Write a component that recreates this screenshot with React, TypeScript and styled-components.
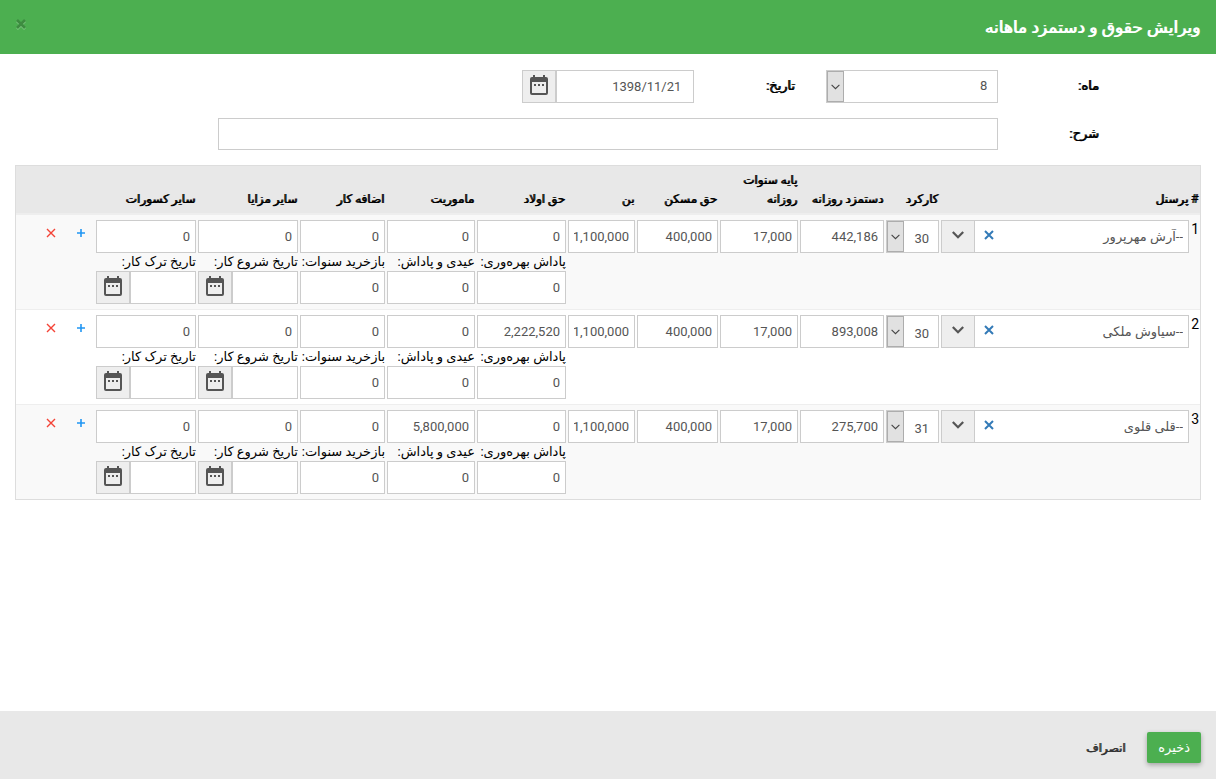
import React, { useState } from "react";
import styled, { createGlobalStyle, css } from "styled-components";

const GlobalStyle = createGlobalStyle`
  *, *::before, *::after { box-sizing: border-box; }
  body {
    margin: 0;
    background: #fff;
    color: #000;
    font: 13px/18px Roboto, "DejaVu Sans", sans-serif;
  }
  button, input, select { font: inherit; margin: 0; }
`;

/* Thickens the regular Persian face, whose own bold cut is much wider. */
const strong = css`
  font-weight: 400;
  text-shadow: -1px 0 0;
`;

const Page = styled.div`
  display: flex;
  flex-direction: column;
  min-height: 100vh;
`;

const Header = styled.header`
  display: flex;
  align-items: center;
  justify-content: space-between;
  min-height: 54px;
  padding: 0 15px;
  background: #4caf50;
`;

const Title = styled.h1`
  margin: 0;
  color: #fff;
  font-size: 17px;
  line-height: 24px;
  ${strong}
`;

const IconButton = styled.button<{ $color: string; $size?: number }>`
  display: inline-flex;
  align-items: center;
  justify-content: center;
  flex: none;
  width: ${(p) => p.$size ?? 12}px;
  height: ${(p) => p.$size ?? 12}px;
  padding: 0;
  border: 0;
  background: none;
  color: ${(p) => p.$color};
  cursor: pointer;
`;

const CloseButton = styled(IconButton)`
  margin-bottom: 6px;
  filter: drop-shadow(0 1px 0 rgba(255, 255, 255, 0.3));
`;

const Main = styled.form`
  flex: 1;
  padding: 16px 0;
`;

const FormGrid = styled.div`
  display: grid;
  grid-template-columns: repeat(12, 1fr);
  row-gap: 15px;
  margin-bottom: 15px;
`;

const FormLabel = styled.label<{ $start: number }>`
  grid-column: ${(p) => p.$start};
  padding: 0 15px;
  line-height: 32px;
  white-space: nowrap;
  ${strong}
`;

const FormField = styled.div<{ $start: number; $span: number }>`
  grid-column: ${(p) => p.$start} / span ${(p) => p.$span};
  padding: 0 15px;
`;

const control = css`
  display: block;
  width: 100%;
  min-width: 0;
  height: 33px;
  border: 1px solid #ccc;
  border-radius: 0;
  background: #fff;
  color: #555;
  outline: none;
  &:focus { border-color: #66afe9; }
`;

const TextInput = styled.input<{ $pad?: number; $short?: boolean }>`
  ${control}
  padding: 0 ${(p) => p.$pad ?? 5}px 1px;
  ${(p) => p.$short && "height: 32px;"}
`;

const SelectBox = styled.div`
  position: relative;
`;

const Select = styled.select<{ $low?: boolean }>`
  ${control}
  appearance: none;
  padding: ${(p) => (p.$low ? "4px 9px 0 18px" : "0 10px 1px 18px")};
`;

const SelectArrow = styled.span`
  position: absolute;
  inset: 1px auto 1px 1px;
  display: flex;
  align-items: center;
  justify-content: center;
  width: 17px;
  border: 1px solid #adadad;
  background: #e1e1e1;
  color: #444;
  pointer-events: none;
`;

const Group = styled.div`
  display: flex;
  align-items: center;
  height: 33px;
  border: 1px solid #ccc;
  background: #fff;
`;

const GroupInput = styled.input<{ $pad?: number }>`
  flex: 1;
  width: 0;
  min-width: 0;
  height: 31px;
  padding: 0 ${(p) => p.$pad ?? 5}px 1px;
  border: 0;
  background: none;
  color: #555;
  outline: none;
`;

const Addon = styled.button<{ $line: number }>`
  display: flex;
  flex: none;
  align-items: center;
  justify-content: center;
  width: ${(p) => 32 + p.$line}px;
  height: 31px;
  padding: 0 0 3px;
  border: 0;
  border-right: ${(p) => p.$line}px solid #ccc;
  background: #eee;
  color: #555;
  cursor: pointer;
`;

const ClearButton = styled(IconButton)`
  margin: 0 8px 3px;
`;

const TableWrap = styled.div`
  padding: 0 15px;
`;

const Table = styled.table`
  width: 100%;
  table-layout: fixed;
  border: 1px solid #ddd;
  border-spacing: 0;
`;

const Col = styled.col<{ $width?: number }>`
  width: ${(p) => (p.$width ? p.$width + "px" : "auto")};
`;

const HeadCell = styled.th`
  height: 48px;
  padding: 5px 1px 4px;
  border-bottom: 1px solid #eee;
  background: #e8e8e8;
  font-size: 12px;
  line-height: 19px;
  text-align: right;
  vertical-align: bottom;
  ${strong}
`;

const Row = styled.tr`
  &:nth-child(odd) { background: #f9f9f9; }
`;

const Cell = styled.td`
  padding: 5px 1px;
  border-top: 1px solid #eee;
  vertical-align: top;
`;

const NumberCell = styled(Cell)`
  padding: 5px 1px 5px 0;
  font-size: 14px;
  text-align: right;
  white-space: nowrap;
`;

const SubLabel = styled.label`
  display: block;
  height: 18px;
  line-height: 18px;
  white-space: nowrap;
`;

const Actions = styled.div`
  display: flex;
  gap: 14px;
  padding: 5px;
`;

const Footer = styled.footer`
  display: flex;
  align-items: center;
  gap: 10px;
  min-height: 68px;
  padding: 4px 15px 0;
  background: #e8e8e8;
`;

const FooterButton = styled.button<{ $primary?: boolean }>`
  height: 31px;
  padding: 1px 11px 0;
  border: 0;
  border-radius: 2px;
  cursor: pointer;
  ${(p) =>
    p.$primary
      ? css`
          background: #4caf50;
          color: #fff;
          box-shadow: 0 2px 5px rgba(0, 0, 0, 0.3);
        `
      : css`
          background: none;
          color: #333;
          font-size: 12px;
          ${strong}
        `}
`;

const CrossIcon = ({ size, weight }: { size: number; weight: number }) => (
  <svg width={size} height={size} viewBox="0 0 10 10" fill="none" stroke="currentColor" strokeWidth={weight} aria-hidden>
    <path d="M1 1L9 9M9 1L1 9" />
  </svg>
);

const PlusIcon = () => (
  <svg width="8" height="8" viewBox="0 0 8 8" fill="none" stroke="currentColor" strokeWidth="1.6" aria-hidden>
    <path d="M4 0V8M0 4H8" />
  </svg>
);

const ThinChevron = () => (
  <svg width="9" height="6" viewBox="0 0 9 6" fill="none" stroke="currentColor" strokeWidth="1.1" aria-hidden>
    <path d="M.6 .8L4.5 4.7L8.4 .8" />
  </svg>
);

const BoldChevron = () => (
  <svg width="12" height="8" viewBox="0 0 12 8" fill="none" stroke="currentColor" strokeWidth="2.2" aria-hidden>
    <path d="M.8 1L6 6.2L11.2 1" />
  </svg>
);

const CalendarIcon = () => (
  <svg width="18" height="20" viewBox="0 0 18 20" fill="currentColor" aria-hidden>
    <path
      fillRule="evenodd"
      d="M3 0H5V2H13V0H15V2H16Q18 2 18 4V18Q18 20 16 20H2Q0 20 0 18V4Q0 2 2 2H3ZM2 7V18H16V7Z"
    />
    <path d="M4 9H6V11H4ZM8 9H10V11H8ZM12 9H14V11H12Z" />
  </svg>
);

const SelectField = ({ id, label, value, max, low }: { id: string; label?: string; value: number; max: number; low?: boolean }) => (
  <SelectBox>
    <Select id={id} aria-label={label} defaultValue={value} $low={low}>
      {Array.from({ length: max }, (_, i) => (
        <option key={i} value={i + 1}>{i + 1}</option>
      ))}
    </Select>
    <SelectArrow><ThinChevron /></SelectArrow>
  </SelectBox>
);

const DateField = ({ id, value, pad }: { id: string; value?: string; pad?: number }) => (
  <Group>
    <GroupInput id={id} type="text" defaultValue={value} $pad={pad} />
    <Addon type="button" $line={2} aria-label="انتخاب تاریخ"><CalendarIcon /></Addon>
  </Group>
);

const PersonField = ({ id, initial }: { id: string; initial: string }) => {
  const [name, setName] = useState(initial);
  return (
    <Group>
      <GroupInput id={id} type="text" aria-label="پرسنل" value={name} onChange={(e) => setName(e.target.value)} />
      <ClearButton type="button" $color="#337ab7" aria-label="پاک کردن" onClick={() => setName("")}>
        <CrossIcon size={10} weight={2} />
      </ClearButton>
      <Addon type="button" $line={1} aria-label="نمایش فهرست"><BoldChevron /></Addon>
    </Group>
  );
};

type Sub = { label: string; kind: "amount" | "date" };
type AmountColumn = { title: string; width: number; sub?: Sub };

const amountColumns: AmountColumn[] = [
  { title: "دستمزد روزانه", width: 86 },
  { title: "پایه سنوات روزانه", width: 80 },
  { title: "حق مسکن", width: 83 },
  { title: "بن", width: 69 },
  { title: "حق اولاد", width: 91, sub: { label: "پاداش بهره‌وری:", kind: "amount" } },
  { title: "ماموریت", width: 90, sub: { label: "عیدی و پاداش:", kind: "amount" } },
  { title: "اضافه کار", width: 87, sub: { label: "بازخرید سنوات:", kind: "amount" } },
  { title: "سایر مزایا", width: 102, sub: { label: "تاریخ شروع کار:", kind: "date" } },
  { title: "سایر کسورات", width: 102, sub: { label: "تاریخ ترک کار:", kind: "date" } },
];

const people = [
  { name: "--آرش مهرپرور", days: 30, amounts: ["442,186", "17,000", "400,000", "1,100,000", "0", "0", "0", "0", "0"] },
  { name: "--سیاوش ملکی", days: 30, amounts: ["893,008", "17,000", "400,000", "1,100,000", "2,222,520", "0", "0", "0", "0"] },
  { name: "--قلی قلوی", days: 31, amounts: ["275,700", "17,000", "400,000", "1,100,000", "0", "5,800,000", "0", "0", "0"] },
];

export default function App() {
  return (
    <Page dir="rtl" lang="fa">
      <GlobalStyle />
      <Header>
        <Title>ویرایش حقوق و دستمزد ماهانه</Title>
        <CloseButton type="button" $color="#3d8c40" aria-label="بستن">
          <CrossIcon size={10} weight={2.6} />
        </CloseButton>
      </Header>
      <Main id="payroll" onSubmit={(e) => e.preventDefault()}>
        <FormGrid>
          <FormLabel $start={2} htmlFor="month">ماه:</FormLabel>
          <FormField $start={3} $span={2}>
            <SelectField id="month" value={8} max={12} />
          </FormField>
          <FormLabel $start={5} htmlFor="date">تاریخ:</FormLabel>
          <FormField $start={6} $span={2}>
            <DateField id="date" value="1398/11/21" pad={12} />
          </FormField>
          <FormLabel $start={2} htmlFor="description">شرح:</FormLabel>
          <FormField $start={3} $span={8}>
            <TextInput id="description" type="text" $pad={12} $short />
          </FormField>
        </FormGrid>
        <TableWrap>
          <Table>
            <colgroup>
              <Col $width={10} />
              <Col />
              <Col $width={55} />
              {amountColumns.map((c) => <Col key={c.title} $width={c.width} />)}
              <Col $width={79} />
            </colgroup>
            <thead>
              <tr>
                <HeadCell scope="col">#</HeadCell>
                <HeadCell scope="col">پرسنل</HeadCell>
                <HeadCell scope="col">کارکرد</HeadCell>
                {amountColumns.map((c) => <HeadCell key={c.title} scope="col">{c.title}</HeadCell>)}
                <HeadCell as="td" />
              </tr>
            </thead>
            <tbody>
              {people.map((p, r) => (
                <Row key={p.name}>
                  <NumberCell>{r + 1}</NumberCell>
                  <Cell><PersonField id={`person-${r}`} initial={p.name} /></Cell>
                  <Cell><SelectField id={`days-${r}`} label="کارکرد" value={p.days} max={31} low /></Cell>
                  {amountColumns.map((c, i) => (
                    <Cell key={c.title}>
                      <TextInput type="text" aria-label={c.title} defaultValue={p.amounts[i]} />
                      {c.sub && <SubLabel htmlFor={`extra-${r}-${i}`}>{c.sub.label}</SubLabel>}
                      {c.sub?.kind === "amount" && <TextInput id={`extra-${r}-${i}`} type="text" defaultValue="0" />}
                      {c.sub?.kind === "date" && <DateField id={`extra-${r}-${i}`} />}
                    </Cell>
                  ))}
                  <Cell>
                    <Actions>
                      <IconButton type="button" $size={16} $color="#2196f3" aria-label="افزودن"><PlusIcon /></IconButton>
                      <IconButton type="button" $size={16} $color="#f44336" aria-label="حذف"><CrossIcon size={10} weight={1.4} /></IconButton>
                    </Actions>
                  </Cell>
                </Row>
              ))}
            </tbody>
          </Table>
        </TableWrap>
      </Main>
      <Footer>
        <FooterButton type="submit" form="payroll" $primary>ذخیره</FooterButton>
        <FooterButton type="button">انصراف</FooterButton>
      </Footer>
    </Page>
  );
}
